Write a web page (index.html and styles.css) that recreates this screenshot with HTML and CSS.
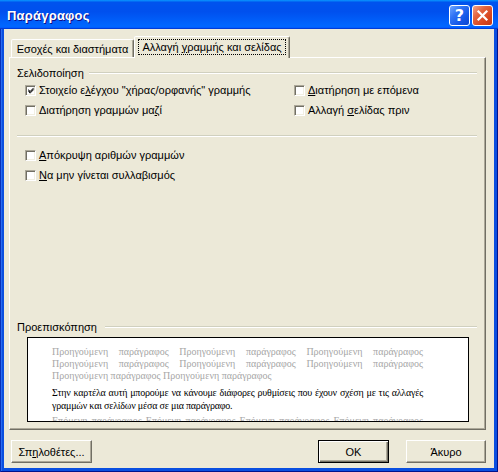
FILE: index.html
```html
<!DOCTYPE html>
<html lang="el">
<head>
<meta charset="utf-8">
<title>Παράγραφος</title>
<link rel="stylesheet" href="styles.css">
</head>
<body>
<div class="window">
  <div class="titlebar">
    <span class="title">Παράγραφος</span>
    <div class="tb-buttons">
      <span class="tb-btn help">?</span>
      <span class="tb-btn close"><svg width="13" height="13" viewBox="0 0 13 13"><path d="M2.5 2.5 L10.5 10.5 M10.5 2.5 L2.5 10.5" stroke="#fff" stroke-width="2.2" stroke-linecap="square"/></svg></span>
    </div>
  </div>
  <div class="body">
    <div class="tabs">
      <div class="tab"><span>Εσο<u>χ</u>ές και διαστήματα</span></div>
      <div class="tab active"><span class="focus">Αλλαγή <u>γ</u>ραμμής και σελίδας</span></div>
    </div>
    <div class="panel">
      <div class="group-head"><span>Σελιδοποίηση</span><span class="rule"></span></div>
      <div class="opts two">
        <label class="opt"><span class="cb checked"><svg width="9" height="9" viewBox="0 0 9 9"><path d="M1.5 3.5 L3.5 5.5 L7.5 1.5 M1.5 4.5 L3.5 6.5 L7.5 2.5 M1.5 5.5 L3.5 7.5 L7.5 3.5" stroke="#000" stroke-width="1" fill="none"/></svg></span><span class="txt">Στοιχείο ε<u>λ</u>έγχου "χήρας/ορφανής" γραμμής</span></label>
        <label class="opt"><span class="cb"></span><span class="txt"><u>Δ</u>ιατήρηση με επόμενα</span></label>
        <label class="opt"><span class="cb"></span><span class="txt">Διατήρηση γραμμών μα<u>ζ</u>ί</span></label>
        <label class="opt"><span class="cb"></span><span class="txt">Αλλαγή <u>σ</u>ελίδας πριν</span></label>
      </div>
      <div class="sep"></div>
      <div class="opts one">
        <label class="opt"><span class="cb"></span><span class="txt"><u>Α</u>πόκρυψη αριθμών γραμμών</span></label>
        <label class="opt"><span class="cb"></span><span class="txt"><u>Ν</u>α μην γίνεται συλλαβισμός</span></label>
      </div>
      <div class="spacer"></div>
      <div class="group-head preview-head"><span>Προεπισκόπηση</span><span class="rule"></span></div>
      <div class="preview">
        <div class="prev gray">
          <span class="j">Προηγούμενη παράγραφος Προηγούμενη παράγραφος Προηγούμενη παράγραφος</span>
          <span class="j">Προηγούμενη παράγραφος Προηγούμενη παράγραφος Προηγούμενη παράγραφος</span>
          <span class="l">Προηγούμενη παράγραφος Προηγούμενη παράγραφος</span>
        </div>
        <div class="prev sample">
          <span class="j">Στην καρτέλα αυτή μπορούμε να κάνουμε διάφορες ρυθμίσεις που έχουν σχέση με τις αλλαγές</span>
          <span class="l">γραμμών και σελίδων μέσα σε μια παράγραφο.</span>
        </div>
        <div class="prev gray next">
          <span class="j">Επόμενη παράγραφος Επόμενη παράγραφος Επόμενη παράγραφος Επόμενη παράγραφος</span>
        </div>
      </div>
    </div>
    <div class="buttons">
      <button class="btn tabsbtn">Σπ<u>η</u>λοθέτες...</button>
      <span class="grow"></span>
      <button class="btn ok">OK</button>
      <button class="btn cancel">Άκυρο</button>
    </div>
  </div>
</div>
</body>
</html>
```
FILE: styles.css
```css
html, body {
  margin: 0;
  padding: 0;
}
body {
  width: 498px;
  height: 472px;
  overflow: hidden;
  font-family: "Liberation Sans", Arial, sans-serif;
  font-size: 11px;
  color: #000;
}
.window {
  width: 498px;
  height: 472px;
  box-sizing: border-box;
  display: flex;
  flex-direction: column;
  padding: 0 4px 4px 4px;
  background: #0A4FE0;
  box-shadow: inset 1px 0 #0830B8, inset -1px 0 #00138C, inset 0 -1px #00138C, inset 2px 0 #2A6CF0;
}
.titlebar {
  height: 29px;
  margin: 0 -4px;
  padding: 0 5px 0 7px;
  display: flex;
  align-items: center;
  background: linear-gradient(180deg, #0997ff, #0053ee 8%, #0050ee 40%, #0066ff 88%, #0066ff 93%, #005bff 95%, #003dd7 96%, #003dd7);
}
.title {
  flex: 1;
  color: #fff;
  font-weight: bold;
  font-size: 13px;
  letter-spacing: 0.2px;
  text-shadow: 1px 1px #0F1089;
  padding-top: 1px;
}
.tb-buttons {
  display: flex;
  gap: 1px;
  padding-top: 1px;
}
.tb-btn {
  width: 21px;
  height: 21px;
  box-sizing: border-box;
  border: 1px solid #fff;
  border-radius: 3px;
  display: flex;
  align-items: center;
  justify-content: center;
  color: #fff;
}
.help {
  background: linear-gradient(135deg, #6FA6FF 0%, #2F74F5 35%, #1556E6 70%, #0D47D0 100%);
  font-weight: bold;
  font-size: 16px;
  font-family: "DejaVu Sans", sans-serif;
}
.close {
  margin-left: 1px;
  background: linear-gradient(135deg, #F4A48A 0%, #E2643F 35%, #D8461F 70%, #C23A18 100%);
}
.body {
  flex: 1;
  background: #ECE9D8;
  display: flex;
  flex-direction: column;
  padding: 7px 8px 5px 5px;
}
.tabs {
  display: flex;
  align-items: flex-end;
  height: 21px;
  padding-left: 2px;
  position: relative;
  z-index: 1;
}
.tab {
  height: 18px;
  box-sizing: border-box;
  border: 1px solid;
  border-bottom: none;
  border-color: #fff #716F64 transparent #fff;
  border-radius: 2px 2px 0 0;
  box-shadow: inset -1px 0 #ACA899;
  background: #ECE9D8;
  display: flex;
  align-items: center;
  justify-content: center;
  white-space: nowrap;
  width: 123px;
  padding-top: 1px;
}
.tab.active {
  width: 156px;
  height: 22px;
  margin-bottom: -1px;
  padding-top: 0;
  padding-bottom: 2px;
}
.focus {
  outline: 1px dotted #000;
  outline-offset: 1px;
  padding: 0 2px;
  line-height: 12px;
}
.panel {
  height: 373px;
  box-sizing: border-box;
  border: 1px solid;
  border-color: #fff #716F64 #716F64 #fff;
  box-shadow: inset -1px -1px #ACA899;
  display: flex;
  flex-direction: column;
  padding: 8px 8px 7px 7px;
}
.group-head {
  display: flex;
  align-items: center;
  line-height: 14px;
  height: 14px;
}
.rule {
  flex: 1;
  height: 0;
  border-top: 1px solid #D0D0BF;
  border-bottom: 1px solid #fff;
  margin-left: 5px;
}
.preview-head .rule {
  margin-left: 8px;
}
.opts {
  display: grid;
  padding-left: 8px;
}
.opts.two {
  grid-template-columns: 269px 1fr;
}
.opts.one {
  grid-template-columns: 1fr;
}
.opt {
  height: 20px;
  display: flex;
  align-items: center;
  white-space: nowrap;
}
.txt {
  white-space: pre;
}
.cb {
  width: 11px;
  height: 11px;
  box-sizing: border-box;
  flex: none;
  background: #fff;
  border: 1px solid;
  border-color: #ACA899 #fff #fff #ACA899;
  box-shadow: inset 1px 1px #716F64, inset -1px -1px #F1EFE2;
  margin-right: 3px;
  display: flex;
  align-items: center;
  justify-content: center;
}
.cb svg {
  display: block;
  margin-left: 1px;
  margin-top: 1px;
}
.sep {
  margin-top: 15px;
  margin-bottom: 8px;
  border-top: 1px solid #D0D0BF;
  border-bottom: 1px solid #fff;
}
.spacer {
  flex: 1;
}
.preview {
  margin: 3px 8px 0 10px;
  height: 85px;
  box-sizing: border-box;
  border: 1px solid #000;
  background: #fff;
  overflow: hidden;
  padding: 8px 45px 0 24px;
  font-family: "Liberation Serif", "DejaVu Serif", "Times New Roman", serif;
  font-size: 10px;
}
.prev span {
  display: block;
  white-space: nowrap;
}
.prev .j {
  text-align: justify;
  text-align-last: justify;
}
.gray {
  color: #A6A6A6;
  line-height: 12px;
}
.sample {
  color: #000;
  line-height: 13px;
  margin-top: 4px;
  letter-spacing: -0.2px;
}
.next {
  margin-top: 3px;
}
.buttons {
  display: flex;
  height: 23px;
  margin-top: 10px;
  padding-left: 2px;
}
.grow {
  flex: 1;
}
.btn {
  height: 23px;
  box-sizing: border-box;
  font-family: "Liberation Sans", Arial, sans-serif;
  font-size: 11px;
  color: #000;
  background: #ECE9D8;
  border: 1px solid;
  border-color: #fff #716F64 #716F64 #fff;
  box-shadow: inset -1px -1px #ACA899;
  padding: 0;
  margin: 0;
}
.tabsbtn {
  width: 81px;
}
.ok {
  width: 71px;
  border: 1px solid #000;
  box-shadow: inset 1px 1px #fff, inset -1px -1px #716F64, inset -2px -2px #ACA899;
  margin-right: 17px;
}
.cancel {
  width: 80px;
}
u {
  text-decoration: underline;
  text-underline-offset: 1px;
}
```
